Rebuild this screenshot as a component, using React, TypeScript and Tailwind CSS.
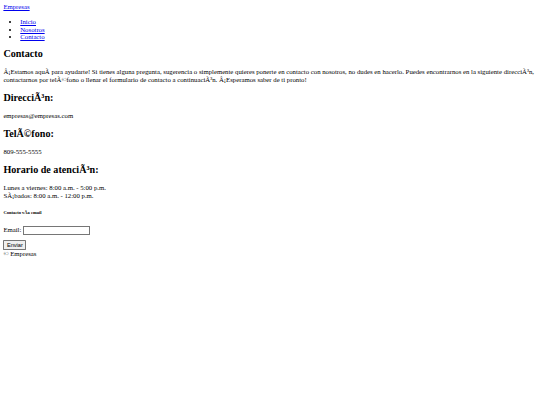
export default function App() {
  return (
    <div className="bg-white text-black min-h-screen">
      <div className="[zoom:0.421875] m-2 font-['Liberation_Serif',serif] text-[16px] leading-[1.15]">
        <header>
          <a href="#" className="text-[#0000ee] underline">Empresas</a>
          <nav>
            <ul className="list-disc mt-4 mb-4 pl-10">
              <li><a href="#" className="text-[#0000ee] underline">Inicio</a></li>
              <li><a href="#" className="text-[#0000ee] underline">Nosotros</a></li>
              <li><a href="#" className="text-[#0000ee] underline">Contacto</a></li>
            </ul>
          </nav>
        </header>
        <main>
          <h2 className="text-[24px] font-bold mt-[16px] mb-[0.83em]">Contacto</h2>
          <p className="my-4">
            Â¡Estamos aquÃ{'\u00ad'} para ayudarte! Si tienes alguna pregunta, sugerencia o simplemente quieres ponerte en contacto con nosotros, no dudes en hacerlo. Puedes encontrarnos en la siguiente direcciÃ³n, contactarnos por telÃ©fono o llenar el formulario de contacto a continuaciÃ³n. Â¡Esperamos saber de ti pronto!
          </p>
          <h2 className="text-[24px] font-bold my-[0.83em]">DirecciÃ³n:</h2>
          <p className="my-4">empresas@empresas.com</p>
          <h2 className="text-[24px] font-bold my-[0.83em]">TelÃ©fono:</h2>
          <p className="my-4">809-555-5555</p>
          <h2 className="text-[24px] font-bold my-[0.83em]">Horario de atenciÃ³n:</h2>
          <p className="my-4">
            Lunes a viernes: 8:00 a.m. - 5:00 p.m.
            <br />
            SÃ¡bados: 8:00 a.m. - 12:00 p.m.
          </p>
          <h6 className="text-[0.67em] font-bold my-[2.33em]">Contacto vÃ{'\u00ad'}a email</h6>
          <form>
            <p className="mt-4 mb-[13px]">
              <label>Email: </label>
              <input
                type="email"
                className="border border-[#767676] px-[2px] py-[1px] w-[159px] text-[13.33px] font-['Liberation_Sans',sans-serif]"
              />
            </p>
            <button
              type="button"
              className="border border-[#767676] bg-[#efefef] rounded-[2px] px-[6px] py-[1px] text-[13.33px] font-['Liberation_Sans',sans-serif]"
            >
              Enviar
            </button>
          </form>
        </main>
        <footer>© Empresas</footer>
      </div>
    </div>
  )
}
